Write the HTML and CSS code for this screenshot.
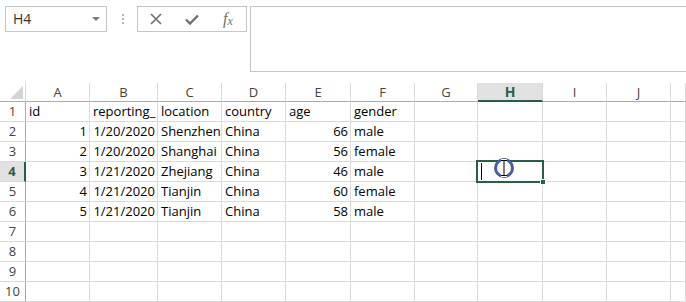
FILE: index.html
```html
<!DOCTYPE html>
<html lang="en">
<head>
<meta charset="utf-8">
<title>Sheet</title>
<link rel="stylesheet" href="styles.css">
</head>
<body>
<div class="app">
  <div class="toolbar">
    <div class="namebox">
      <span class="name">H4</span>
      <svg class="dd" width="8" height="4" viewBox="0 0 8 4"><path d="M0 0H8L4 4Z" fill="#7a7a7a"/></svg>
    </div>
    <div class="grip"><i></i><i></i><i></i></div>
    <div class="fbtns">
      <span class="slot"><svg width="12" height="12" viewBox="0 0 12 12"><path d="M1 1L11 11M11 1L1 11" stroke="#6f6f6f" stroke-width="1.6" fill="none"/></svg></span>
      <span class="slot"><svg width="14" height="11" viewBox="0 0 14 11"><path d="M1 5.5L5 9.5L13 1.5" stroke="#6f6f6f" stroke-width="2.4" fill="none"/></svg></span>
      <span class="slot fx">f<span class="fxx">x</span></span>
    </div>
    <div class="finput"></div>
  </div>

  <div class="sheet">
    <div class="grid">
      <div class="corner"><svg width="13" height="13" viewBox="0 0 13 13"><path d="M13 0V13H0Z" fill="#d4d4d4"/></svg></div>
      <div class="h">A</div><div class="h">B</div><div class="h">C</div><div class="h">D</div><div class="h">E</div><div class="h">F</div><div class="h">G</div><div class="h on">H</div><div class="h">I</div><div class="h">J</div><div class="h"></div>

      <div class="r">1</div><div class="c">id</div><div class="c">reporting_</div><div class="c">location</div><div class="c">country</div><div class="c">age</div><div class="c">gender</div><div class="c"></div><div class="c"></div><div class="c"></div><div class="c"></div><div class="c"></div>

      <div class="r">2</div><div class="c n">1</div><div class="c n">1/20/2020</div><div class="c">Shenzhen</div><div class="c">China</div><div class="c n">66</div><div class="c">male</div><div class="c"></div><div class="c"></div><div class="c"></div><div class="c"></div><div class="c"></div>

      <div class="r">3</div><div class="c n">2</div><div class="c n">1/20/2020</div><div class="c">Shanghai</div><div class="c">China</div><div class="c n">56</div><div class="c">female</div><div class="c"></div><div class="c"></div><div class="c"></div><div class="c"></div><div class="c"></div>

      <div class="r on">4</div><div class="c n">3</div><div class="c n">1/21/2020</div><div class="c">Zhejiang</div><div class="c">China</div><div class="c n">46</div><div class="c">male</div><div class="c"></div><div class="c"></div><div class="c"></div><div class="c"></div><div class="c"></div>

      <div class="r">5</div><div class="c n">4</div><div class="c n">1/21/2020</div><div class="c">Tianjin</div><div class="c">China</div><div class="c n">60</div><div class="c">female</div><div class="c"></div><div class="c"></div><div class="c"></div><div class="c"></div><div class="c"></div>

      <div class="r">6</div><div class="c n">5</div><div class="c n">1/21/2020</div><div class="c">Tianjin</div><div class="c">China</div><div class="c n">58</div><div class="c">male</div><div class="c"></div><div class="c"></div><div class="c"></div><div class="c"></div><div class="c"></div>

      <div class="r">7</div><div class="c"></div><div class="c"></div><div class="c"></div><div class="c"></div><div class="c"></div><div class="c"></div><div class="c"></div><div class="c"></div><div class="c"></div><div class="c"></div><div class="c"></div>

      <div class="r">8</div><div class="c"></div><div class="c"></div><div class="c"></div><div class="c"></div><div class="c"></div><div class="c"></div><div class="c"></div><div class="c"></div><div class="c"></div><div class="c"></div><div class="c"></div>

      <div class="r">9</div><div class="c"></div><div class="c"></div><div class="c"></div><div class="c"></div><div class="c"></div><div class="c"></div><div class="c"></div><div class="c"></div><div class="c"></div><div class="c"></div><div class="c"></div>

      <div class="r">10</div><div class="c"></div><div class="c"></div><div class="c"></div><div class="c"></div><div class="c"></div><div class="c"></div><div class="c"></div><div class="c"></div><div class="c"></div><div class="c"></div><div class="c"></div>
    </div>

    <div class="selection"><span class="caretline"></span><span class="handle"></span></div>

    <svg class="pointer" width="24" height="24" viewBox="0 0 24 24">
      <circle cx="12" cy="12" r="8.5" fill="none" stroke="#4a5c9c" stroke-width="3"/>
      <path d="M9 4.5H15M12 4.5V19.5M9 19.5H15" stroke="#fff" stroke-width="3" fill="none"/>
      <path d="M9 4.5H15M12 4.5V19.5M9 19.5H15" stroke="#000" stroke-width="1" fill="none"/>
    </svg>
  </div>
</div>
</body>
</html>
```

FILE: styles.css
```css
* { box-sizing: border-box; }

html, body {
  margin: 0;
  padding: 0;
  background: #fff;
}

body {
  font-family: "Open Sans", "Liberation Sans", sans-serif;
  color: #000;
  width: 686px;
  height: 302px;
  overflow: hidden;
}

.toolbar {
  display: flex;
  align-items: flex-start;
  height: 82px;
  padding: 6px 0 0 5px;
}

.namebox {
  width: 102px;
  height: 26px;
  border: 1px solid #c6c6c6;
  display: flex;
  align-items: center;
  justify-content: space-between;
  padding: 0 6px 0 7px;
}

.name {
  font-size: 14px;
  color: #333;
  line-height: 1;
}

.grip {
  margin-left: 15px;
  width: 2px;
  padding-top: 8px;
  display: flex;
  flex-direction: column;
  gap: 2px;
}

.grip i {
  display: block;
  width: 2px;
  height: 2px;
  background: #b5b5b5;
}

.fbtns {
  margin-left: 13px;
  width: 110px;
  height: 26px;
  border: 1px solid #c6c6c6;
  display: flex;
  align-items: center;
}

.slot {
  width: 36px;
  display: flex;
  justify-content: center;
  align-items: center;
}

.fx {
  font-family: "Liberation Serif", serif;
  font-style: italic;
  font-size: 16px;
  color: #6f6f6f;
  line-height: 1;
}

.fxx {
  font-size: 12px;
  position: relative;
  top: 2px;
}

.finput {
  margin-left: 3px;
  flex: 1;
  height: 66px;
  border: 1px solid #c6c6c6;
  border-right: none;
}

.sheet {
  position: relative;
}

.grid {
  display: grid;
  grid-template-columns: 26px 64px 68px 64px 64px 65px 64px 63px 65px 64px 64px 1fr;
  grid-auto-rows: 20px;
  font-size: 13px;
}

.corner {
  border-right: 1px solid #dadada;
  border-bottom: 1px solid #ababab;
  display: flex;
  justify-content: flex-end;
  align-items: flex-end;
  padding: 0 2px 2px 0;
}

.h {
  border-right: 1px solid #dadada;
  border-bottom: 1px solid #ababab;
  text-align: center;
  color: #444;
  line-height: 19px;
  margin-top: 1px;
}

.h.on {
  background: #e1e1e1;
  border-bottom: 2px solid #285e43;
  color: #285e43;
  font-weight: bold;
  font-size: 14px;
  line-height: 17px;
}

.r {
  border-right: 1px solid #ababab;
  border-bottom: 1px solid #dadada;
  text-align: center;
  color: #444;
  line-height: 19px;
}

.r.on {
  background: #e1e1e1;
  border-right: 2px solid #285e43;
  color: #285e43;
  font-weight: bold;
}

.c {
  border-right: 1px solid #dadada;
  border-bottom: 1px solid #dadada;
  padding: 0 2px 0 3px;
  line-height: 19px;
  white-space: nowrap;
  overflow: hidden;
}

.c.n {
  text-align: right;
}

.selection {
  position: absolute;
  left: 476px;
  top: 78px;
  width: 68px;
  height: 23px;
  border: 2px solid #285e43;
}

.caretline {
  position: absolute;
  left: 3px;
  top: 1px;
  width: 1px;
  height: 17px;
  background: #000;
}

.handle {
  position: absolute;
  right: -4px;
  bottom: -4px;
  width: 6px;
  height: 6px;
  background: #285e43;
  border: 1px solid #fff;
}

.pointer {
  position: absolute;
  left: 492px;
  top: 74px;
}
```
